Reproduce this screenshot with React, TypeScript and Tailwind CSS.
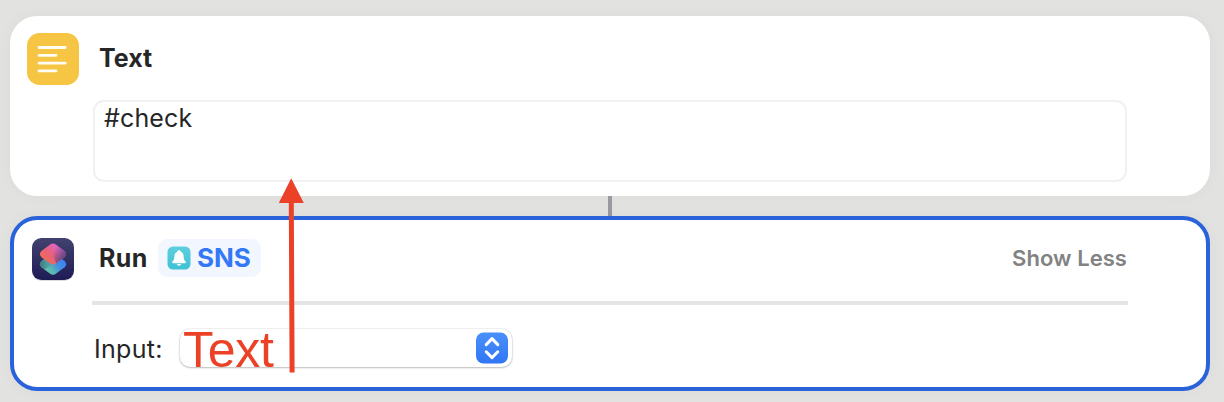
import React from "react";

function TextIcon() {
  return (
    <svg width="52" height="52" viewBox="0 0 52 52" className="shrink-0">
      <rect width="52" height="52" rx="12.5" fill="#f6c544" />
      <path
        d="M12 14.5H38.2M12 22.3H29M12 30.1H38.2M12 37.9H29"
        stroke="#fffdf3"
        strokeWidth="2.8"
        strokeLinecap="round"
      />
    </svg>
  );
}

function ShortcutsIcon() {
  return (
    <svg width="44" height="44" viewBox="0 0 44 44" className="shrink-0">
      <defs>
        <linearGradient id="tile" x1="0" y1="0" x2="0" y2="1">
          <stop offset="0" stopColor="#41426f" />
          <stop offset="1" stopColor="#1f1b55" />
        </linearGradient>
        <linearGradient id="lower" gradientUnits="userSpaceOnUse" x1="14" y1="35" x2="33" y2="23">
          <stop offset="0" stopColor="#62c3a0" />
          <stop offset="0.3" stopColor="#5ab9b4" />
          <stop offset="0.65" stopColor="#438ede" />
          <stop offset="1" stopColor="#3b83f5" />
        </linearGradient>
        <linearGradient id="upper" gradientUnits="userSpaceOnUse" x1="13" y1="22" x2="28" y2="8">
          <stop offset="0" stopColor="#ee6b58" />
          <stop offset="0.4" stopColor="#e9617c" />
          <stop offset="1" stopColor="#dc66cc" />
        </linearGradient>
        <linearGradient id="fade" gradientUnits="userSpaceOnUse" x1="22" y1="14" x2="34" y2="21">
          <stop offset="0" stopColor="#4b3f78" stopOpacity="0" />
          <stop offset="1" stopColor="#4b3f78" stopOpacity="0.9" />
        </linearGradient>
        <linearGradient id="left" gradientUnits="userSpaceOnUse" x1="8" y1="0" x2="22" y2="0">
          <stop offset="0" stopColor="#2c4a70" stopOpacity="0.65" />
          <stop offset="1" stopColor="#2c4a70" stopOpacity="0" />
        </linearGradient>
      </defs>
      <rect x="1" y="1.5" width="42" height="42.3" rx="9.5" fill="#b9b9c5" opacity="0.7" />
      <rect x="1" y="1" width="42" height="42" rx="9.5" fill="url(#tile)" />
      <path
        d="M18.8 18Q22 15.8 25.2 18L33.6 24Q36.6 27.2 33.6 30.2L25.2 36.6Q22 39 18.8 36.6L10.4 30.2Q7.4 27.2 10.4 24Z"
        fill="url(#lower)"
      />
      <path
        d="M10.4 24L22 18V28L13 32.2L10.4 30.2Q7.4 27.2 10.4 24Z"
        fill="url(#left)"
      />
      <path
        d="M18.8 7.8Q22 5.4 25.2 7.8L33.6 14Q36.6 17 33.6 20.2L25.2 26.2Q22 28.6 18.8 26.2L10.4 20.2Q7.4 17 10.4 14Z"
        fill="url(#upper)"
      />
      <path
        d="M25.2 7.8L33.6 14Q36.6 17 33.6 20.2L25.2 26.2L22 18Z"
        fill="url(#fade)"
      />
    </svg>
  );
}

function BellIcon() {
  return (
    <svg width="24" height="24" viewBox="0 0 24 24" className="shrink-0">
      <defs>
        <linearGradient id="teal" x1="0" y1="0" x2="0" y2="1">
          <stop offset="0" stopColor="#5dcfdf" />
          <stop offset="1" stopColor="#3fc1d5" />
        </linearGradient>
      </defs>
      <rect x="0.5" y="0.5" width="23" height="23" rx="5.5" fill="url(#teal)" />
      <path
        d="M12 4.3C13 4.3 13.6 4.9 13.8 5.7C15.6 6.4 16.5 8 16.6 10.2C16.7 12.9 17.2 13.9 18.2 15C19.2 16.1 18.7 17.3 17.4 17.3H6.6C5.3 17.3 4.8 16.1 5.8 15C6.8 13.9 7.3 12.9 7.4 10.2C7.5 8 8.4 6.4 10.2 5.7C10.4 4.9 11 4.3 12 4.3ZM9.9 18H14.1C13.9 19.1 13.1 19.7 12 19.7C10.9 19.7 10.1 19.1 9.9 18Z"
        fill="#fff"
      />
    </svg>
  );
}

function Stepper() {
  return (
    <svg width="32" height="32" viewBox="0 0 32 32" className="shrink-0">
      <defs>
        <linearGradient id="blue" x1="0" y1="0" x2="0" y2="1">
          <stop offset="0" stopColor="#4a90f9" />
          <stop offset="1" stopColor="#3176f5" />
        </linearGradient>
      </defs>
      <rect y="0.5" width="32" height="31" rx="7.5" fill="url(#blue)" />
      <path
        d="M10.2 12.6L16 6.6L21.8 12.6M10.2 19.8L16 25.6L21.8 19.8"
        fill="none"
        stroke="#fff"
        strokeWidth="3"
        strokeLinecap="round"
        strokeLinejoin="round"
      />
    </svg>
  );
}

export default function App() {
  return (
    <main className="relative flex h-[402px] w-[1224px] flex-col overflow-hidden bg-[#e2e2e0] pl-[10px] pr-[14px] pt-4 font-['Inter',sans-serif] text-[#262626]">
      <section className="h-[180px] shrink-0 rounded-[27px] bg-white pl-[17px] pt-[17px] shadow-[0_0_16px_rgba(0,0,0,0.035)]">
        <header className="flex h-[52px] items-center">
          <TextIcon />
          <h2 className="mb-[2px] ml-[20px] text-[25px] font-[650] leading-8">Text</h2>
        </header>
        <div className="ml-[66px] mt-[15px] h-[82px] w-[1034px] rounded-[11px] border-2 border-[#f1f1f1] pl-[9px]">
          <p className="text-[25px] leading-8 tracking-[0.15px]">#check</p>
        </div>
      </section>

      <div className="ml-[598px] h-5 w-1 shrink-0 bg-[#9999a0]" />

      <section className="h-[175px] shrink-0 rounded-[27px] border-4 border-[#2962d9] bg-white pl-[17px] pt-[17px] shadow-[0_0_16px_rgba(0,0,0,0.035)]">
        <header className="flex h-[44px] w-[1096px] items-center">
          <ShortcutsIcon />
          <h2 className="mb-[2px] ml-[24px] w-[49px] text-[25px] font-[650] leading-8 tracking-[0.4px]">Run</h2>
          <div className="mb-[2px] ml-[10px] flex h-[38px] w-[103px] items-center rounded-[9px] bg-[#f2f7ff] pl-[9px]">
            <BellIcon />
            <span className="ml-[6px] text-[26px] font-[650] leading-8 text-[#3478f6]">SNS</span>
          </div>
          <span className="mb-[2px] ml-auto text-[22px] font-semibold leading-7 tracking-[0.05px] text-[#828282]">
            Show Less
          </span>
        </header>
        <div className="ml-[61px] mt-[20px] h-1 w-[1036px] bg-[#e5e5e5]" />
        <div className="ml-[63px] mt-[24px] flex h-[38px] items-center">
          <span className="w-[86px] pt-[2px] text-[25px] leading-8 tracking-[0.3px]">Input:</span>
          <div className="flex h-[38px] w-[332px] items-center justify-end rounded-[10px] bg-white pr-[4px] shadow-[0_0_2px_rgba(0,0,0,0.2),0_1px_2px_rgba(0,0,0,0.22)]">
            <Stepper />
          </div>
        </div>
      </section>

      <span className="absolute left-[183px] top-[322px] font-['Liberation_Sans',sans-serif] text-[50px] leading-[57px] tracking-[-0.3px] text-[#eb4127]">
        Text
      </span>
      <svg width="28" height="196" viewBox="0 0 28 196" className="absolute left-[278px] top-[178px]">
        <path d="M13.2 0.2L25.8 25H15.8L16.6 194.5H11.6L10.8 25H0.8Z" fill="#eb4127" />
      </svg>
    </main>
  );
}
